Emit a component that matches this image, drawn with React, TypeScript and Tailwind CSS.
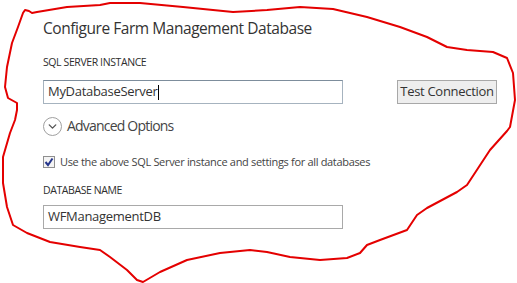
import { ChevronDown } from "lucide-react";

const scribble =
  "23,13 25,10 29,11 32,13 37,12 67,7 100,5 110,3 140,3 183,7 233,12 267,10 300,7 333,9 367,17 400,27 427,37 447,47 467,50 493,52 507,58 513,73 515,100 510,127 507,131 490,150 467,185 457,192 427,208 417,215 407,230 380,240 367,245 360,253 347,258 320,260 290,257 267,252 250,250 220,253 187,260 160,272 143,282 137,280 127,270 110,257 100,250 80,247 50,242 27,233 13,225 7,207 3,183 3,157 10,133 15,120 17,110 17,103 8,98 5,87 7,67 12,43 18,27 23,13";

function App() {
  return (
    <div
      className="relative w-[517px] h-[283px] overflow-hidden bg-white text-[#444]"
      style={{ fontFamily: '"Open Sans", "Noto Sans", sans-serif' }}
    >
      <div className="flex flex-col pl-[43px] pt-[16px]">
        {/* titulo */}
        <h1 className="text-[15.5px] leading-[24px] text-[#333] tracking-[-0.45px]">
          Configure Farm Management Database
        </h1>

        <p className="mt-[14px] text-[10.5px] leading-[16px] text-[#2e2e2e] tracking-[-0.4px]">
          SQL SERVER INSTANCE
        </p>

        <div className="mt-[10px] flex items-center">
          <div className="w-[300px] h-[24px] flex items-center px-[4px] border border-[#a6b3bf] border-t-[#7d8d9c] text-[13px] text-[#333] tracking-[-0.3px]">
            MyDatabaseServer
            <span className="ml-[1px] w-px h-[15px] bg-black" />
          </div>
          <button className="ml-[54px] w-[100px] h-[24px] border border-[#a8a8a8] bg-[#eeeeee] text-[13px] text-[#333] tracking-[-0.3px]">
            Test Connection
          </button>
        </div>

        <div className="mt-[12px] flex items-center gap-[5px]">
          <span className="w-[19px] h-[19px] rounded-full border border-[#a0a0a0] flex items-center justify-center">
            <ChevronDown size={13} strokeWidth={2.5} className="text-[#555]" />
          </span>
          <span className="text-[14px] leading-[20px] text-[#444] tracking-[-0.8px]">Advanced Options</span>
        </div>

        <div className="mt-[18px] flex items-center gap-[5px]">
          <span className="w-[12px] h-[12px] border border-[#8f8f8f] bg-[#f4f4f4] flex items-center justify-center">
            <svg width="10" height="10" viewBox="0 0 10 10">
              <path d="M1.5 5 L4 8 L8.5 1.5" fill="none" stroke="#26368c" strokeWidth="2" />
            </svg>
          </span>
          <span className="text-[11px] leading-[16px] text-[#444] tracking-[-0.32px]">
            Use the above SQL Server instance and settings for all databases
          </span>
        </div>

        <p className="mt-[12px] text-[10.5px] leading-[16px] text-[#2e2e2e] tracking-[-0.4px]">
          DATABASE NAME
        </p>

        <div className="mt-[7px] w-[300px] h-[24px] flex items-center px-[4px] border border-[#a9a9a9] text-[13px] text-[#333] tracking-[-0.3px]">
          WFManagementDB
        </div>
      </div>

      {/* rabisco vermelho por cima */}
      <svg className="absolute inset-0 pointer-events-none" width="517" height="283" viewBox="0 0 517 283">
        <polyline
          points={scribble}
          fill="none"
          stroke="#e40000"
          strokeWidth="2"
          strokeLinejoin="round"
          strokeLinecap="round"
        />
      </svg>
    </div>
  );
}

export default App;
